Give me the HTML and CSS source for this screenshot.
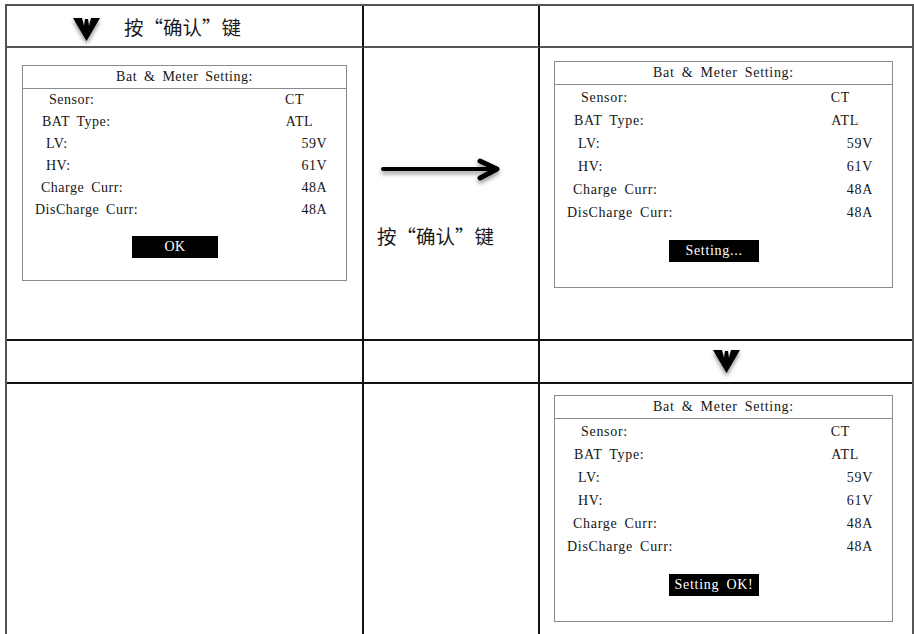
FILE: index.html
```html
<!DOCTYPE html>
<html lang="zh-CN">
<head>
  <meta charset="UTF-8">
  <meta name="viewport" content="width=device-width, initial-scale=1.0">
  <title>Bat &amp; Meter Setting</title>
  <link rel="stylesheet" href="styles.css">
</head>
<body>
  <div class="sheet">
    <!-- row 1 -->
    <div class="cell head-cell">
      <svg class="down-icon" width="27" height="24" viewBox="0 0 27 24">
        <polygon points="0,0 9,0 11,8 12,1 15,1 16,8 18,0 27,0 13.5,23" fill="#000"/>
      </svg>
      <span class="key-text">按“确认”键</span>
    </div>
    <div class="cell"></div>
    <div class="cell cell-last"></div>

    <!-- row 2 -->
    <div class="cell screen-cell screen-a">
      <div class="panel panel-a">
        <div class="panel-title">Bat &amp; Meter Setting:</div>
        <div class="panel-body">
          <div class="row"><span class="lbl i1">Sensor:</span><span class="val o1">CT</span></div>
          <div class="row"><span class="lbl i2">BAT Type:</span><span class="val o2">ATL</span></div>
          <div class="row"><span class="lbl i3">LV:</span><span class="val o3">59V</span></div>
          <div class="row"><span class="lbl i3">HV:</span><span class="val o3">61V</span></div>
          <div class="row"><span class="lbl i4">Charge Curr:</span><span class="val o4">48A</span></div>
          <div class="row"><span class="lbl i5">DisCharge Curr:</span><span class="val o4">48A</span></div>
        </div>
        <div class="btn-row"><span class="btn btn-ok">OK</span></div>
      </div>
    </div>
    <div class="cell mid-cell">
      <svg class="right-arrow" width="122" height="26" viewBox="0 0 122 26">
        <path d="M3 12 L116 12" stroke="#000" stroke-width="4" stroke-linecap="round"/>
        <path d="M100 4 L117 12 L100 21" fill="none" stroke="#000" stroke-width="5" stroke-linecap="round" stroke-linejoin="round"/>
      </svg>
      <span class="key-text">按“确认”键</span>
    </div>
    <div class="cell cell-last screen-cell screen-b">
      <div class="panel">
        <div class="panel-title">Bat &amp; Meter Setting:</div>
        <div class="panel-body">
          <div class="row"><span class="lbl i1">Sensor:</span><span class="val o1">CT</span></div>
          <div class="row"><span class="lbl i2">BAT Type:</span><span class="val o2">ATL</span></div>
          <div class="row"><span class="lbl i3">LV:</span><span class="val o3">59V</span></div>
          <div class="row"><span class="lbl i3">HV:</span><span class="val o3">61V</span></div>
          <div class="row"><span class="lbl i4">Charge Curr:</span><span class="val o4">48A</span></div>
          <div class="row"><span class="lbl i5">DisCharge Curr:</span><span class="val o4">48A</span></div>
        </div>
        <div class="btn-row"><span class="btn">Setting...</span></div>
      </div>
    </div>

    <!-- row 3 -->
    <div class="cell"></div>
    <div class="cell"></div>
    <div class="cell cell-last down-cell">
      <svg class="down-icon" width="27" height="24" viewBox="0 0 27 24">
        <polygon points="0,0 9,0 11,8 12,1 15,1 16,8 18,0 27,0 13.5,23" fill="#000"/>
      </svg>
    </div>

    <!-- row 4 -->
    <div class="cell"></div>
    <div class="cell"></div>
    <div class="cell cell-last screen-cell screen-c">
      <div class="panel">
        <div class="panel-title">Bat &amp; Meter Setting:</div>
        <div class="panel-body">
          <div class="row"><span class="lbl i1">Sensor:</span><span class="val o1">CT</span></div>
          <div class="row"><span class="lbl i2">BAT Type:</span><span class="val o2">ATL</span></div>
          <div class="row"><span class="lbl i3">LV:</span><span class="val o3">59V</span></div>
          <div class="row"><span class="lbl i3">HV:</span><span class="val o3">61V</span></div>
          <div class="row"><span class="lbl i4">Charge Curr:</span><span class="val o4">48A</span></div>
          <div class="row"><span class="lbl i5">DisCharge Curr:</span><span class="val o4">48A</span></div>
        </div>
        <div class="btn-row"><span class="btn">Setting OK!</span></div>
      </div>
    </div>
  </div>
</body>
</html>
```

FILE: styles.css
```css
* {
  margin: 0;
  padding: 0;
  box-sizing: border-box;
}
body {
  background: #fff;
  color: #111;
  font-family: "Noto Sans CJK SC", "Noto Sans", sans-serif;
  overflow: hidden;
}

/* outer table */
.sheet {
  margin: 4px 0 0 5px;
  width: 909px;
  border: 2px solid #555;
  border-bottom: none;
  display: grid;
  grid-template-columns: 357px 176px 1fr;
  grid-template-rows: 42px 293px 43px 260px;
}
.cell {
  border-right: 2px solid #111;
  border-bottom: 2px solid #111;
}
.cell-last {
  border-right: none;
}
.sheet > .cell:nth-child(-n+3) {
  border-bottom-color: #555;
}

/* header row */
.head-cell {
  display: flex;
  align-items: center;
  padding-left: 66px;
  gap: 24px;
}
.down-icon {
  filter: drop-shadow(0 3px 2px rgba(0, 0, 0, 0.45));
}
.head-cell .down-icon {
  margin-top: 8px;
}
.key-text {
  font-size: 19.5px;
  color: #1a1a1a;
}
.down-cell {
  display: flex;
  justify-content: center;
  padding-top: 9px;
}

/* middle column */
.mid-cell {
  display: flex;
  flex-direction: column;
  padding: 109px 0 0 13px;
}
.right-arrow {
  margin-left: 3px;
  filter: drop-shadow(0 3px 2px rgba(0, 0, 0, 0.4));
}
.mid-cell .key-text {
  margin-top: 38px;
}

/* LCD screens */
.screen-a {
  padding: 17px 0 0 15px;
}
.screen-b {
  padding: 13px 0 0 14px;
}
.screen-c {
  padding: 11px 0 0 14px;
}
.panel {
  width: 339px;
  height: 227px;
  border: 1px solid #8a8a8a;
  font-family: "Liberation Serif", "Times New Roman", serif;
  font-size: 14px;
  letter-spacing: 0.7px;
  word-spacing: 3px;
  color: #161616;
}
.panel-a {
  width: 325px;
  height: 216px;
  letter-spacing: 0.5px;
}
.panel-title {
  height: 23px;
  line-height: 22px;
  text-align: center;
  border-bottom: 1px solid #8a8a8a;
}
.panel-body {
  padding-top: 1px;
}
.panel-a .panel-body {
  padding-top: 0;
}
.row {
  display: flex;
  justify-content: space-between;
  height: 23px;
  line-height: 23px;
}
.panel-a .row {
  height: 22px;
  line-height: 22px;
}
.i1 { padding-left: 26px; }
.i2 { padding-left: 19px; }
.i3 { padding-left: 23px; }
.i4 { padding-left: 18px; }
.i5 { padding-left: 12px; }
.o1 { padding-right: 42px; }
.o2 { padding-right: 33px; }
.o3 { padding-right: 19px; }
.o4 { padding-right: 19px; }

.btn-row {
  display: flex;
  justify-content: center;
  padding-right: 19px;
  margin-top: 16px;
}
.panel-a .btn-row {
  margin-top: 15px;
}
.btn {
  width: 90px;
  height: 22px;
  line-height: 22px;
  text-align: center;
  background: #000;
  color: #fff;
}
.btn-ok {
  width: 86px;
}
```
